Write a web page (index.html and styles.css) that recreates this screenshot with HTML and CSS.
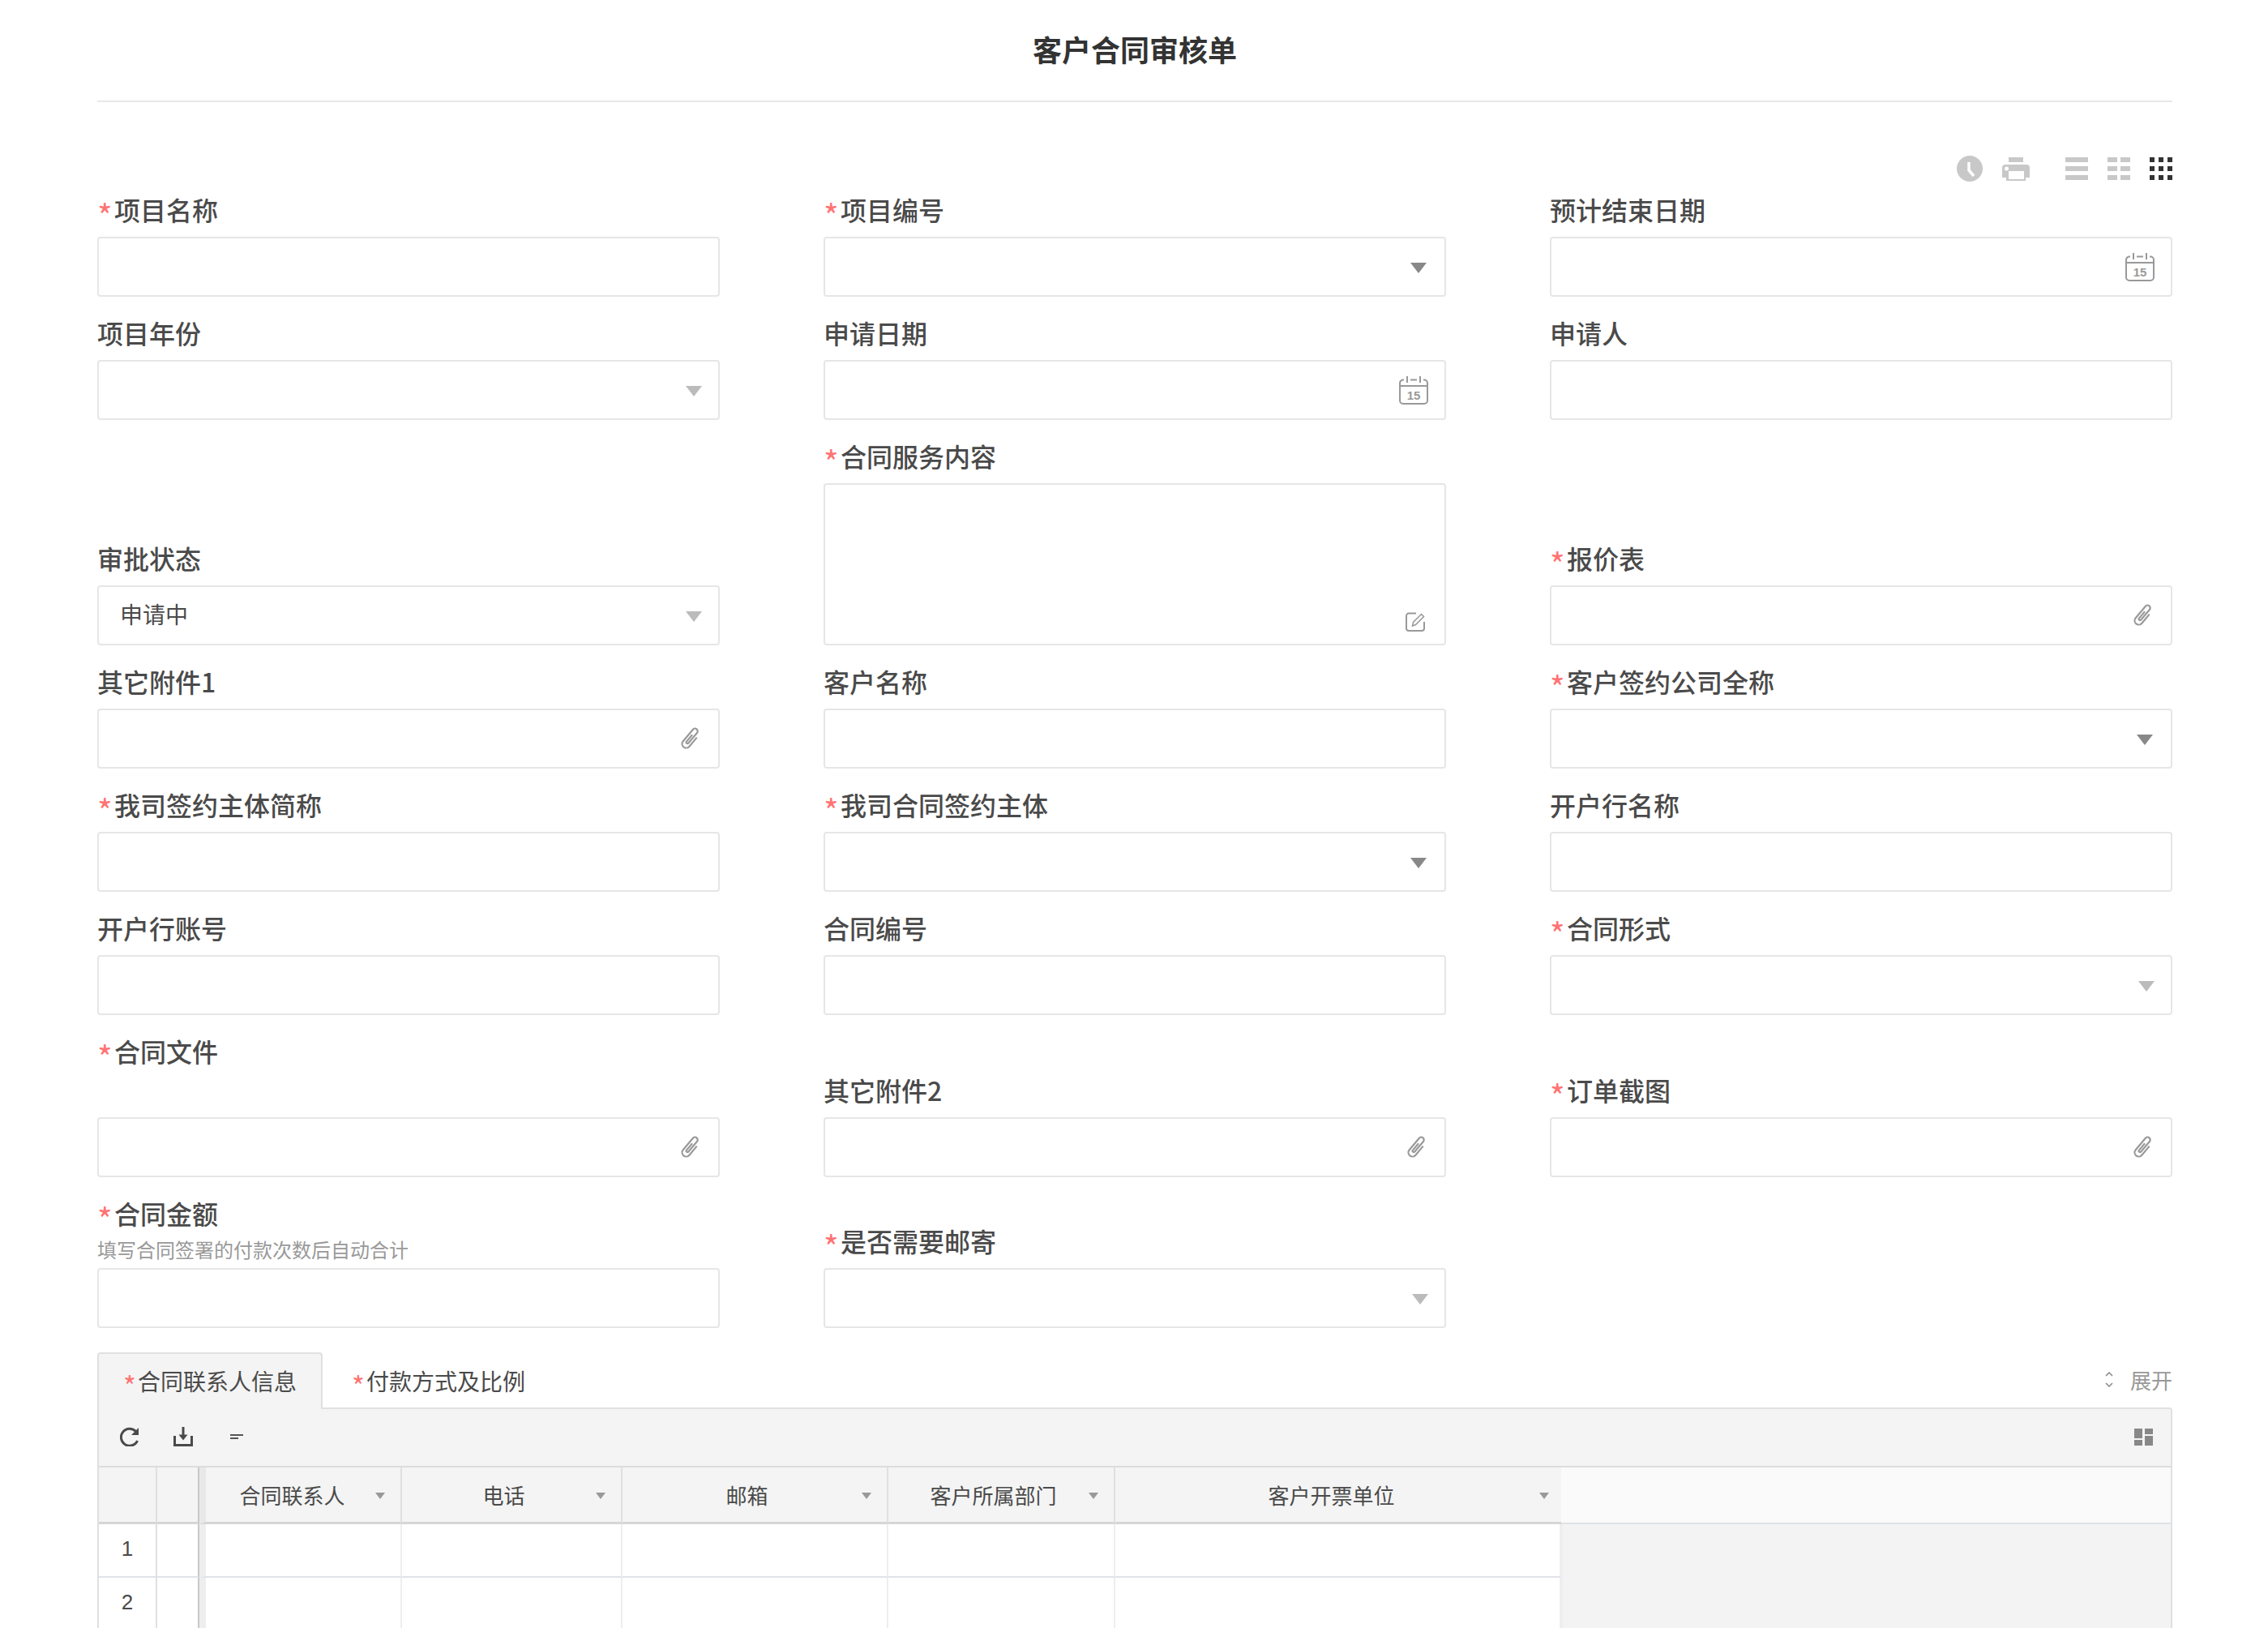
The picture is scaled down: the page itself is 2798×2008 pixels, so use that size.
FILE: index.html
```html
<!DOCTYPE html>
<html>
	<head>
		<meta charset="UTF-8">
		<title>客户合同审核单</title>
		<link rel="stylesheet" href="styles.css">
	</head>
	<body>
		<svg class="defs" width="0" height="0">
			<symbol id="i-clip" viewBox="0 0 24 28">
				<path d="M5-6V8.500a5 5 0 0 1-10 0V-10.500a3.250 3.250 0 0 1 6.500 0V6a1.500 1.500 0 0 1-3 0V-5" transform="translate(12 14) rotate(40)" fill="none" stroke="#999" stroke-width="2.200"/>
			</symbol>
		</svg>

		<div class="page">
			<h1 class="title">客户合同审核单</h1>

			<div class="tools">
				<svg width="32" height="32" viewBox="0 0 32 32"><circle cx="16" cy="16" r="16" fill="#c8c8c8"/><path d="M15 8v10l6 7" fill="none" stroke="#fff" stroke-width="3.500"/></svg>
				<svg class="tool-print" width="34" height="29" viewBox="0 0 34 29"><path fill="#c8c8c8" d="M8 0h18v6H8zM4 9h26a4 4 0 0 1 4 4v12h-5v4H5v-4H0V13a4 4 0 0 1 4-4z"/><path fill="#fff" d="M8 17h19v10H8z"/><circle cx="5.500" cy="14" r="2.500" fill="#fff"/></svg>
				<svg class="tool-view" width="28" height="28" viewBox="0 0 28 28" fill="#c8c8c8"><path d="M0 0h28v6H0zM0 11h28v6H0zM0 22h28v6H0z"/></svg>
				<svg width="28" height="28" viewBox="0 0 28 28" fill="#c8c8c8"><path d="M0 0h12v6H0zM16 0h12v6H16zM0 11h12v6H0zM16 11h12v6H16zM0 22h12v6H0zM16 22h12v6H16z"/></svg>
				<svg width="28" height="28" viewBox="0 0 28 28" fill="#333"><path d="M0 0h6v6H0zM11 0h6v6h-6zM22 0h6v6h-6zM0 11h6v6H0zM11 11h6v6h-6zM22 11h6v6h-6zM0 22h6v6H0zM11 22h6v6h-6zM22 22h6v6h-6z"/></svg>
			</div>

			<div class="form">
				<div class="field">
					<div class="label"><span class="req">*</span>项目名称</div>
					<div class="input"></div>
				</div>
				<div class="field">
					<div class="label"><span class="req">*</span>项目编号</div>
					<div class="input"><i class="arrow dark"></i></div>
				</div>
				<div class="field">
					<div class="label">预计结束日期</div>
					<div class="input">
						<svg class="ico-cal" viewBox="0 0 36 36"><path d="M6 5.500H5a4 4 0 0 0-4 4V31a4 4 0 0 0 4 4h26a4 4 0 0 0 4-4V9.500a4 4 0 0 0-4-4h-1M14 5.500h8M1 13h34M10 1v8M26 1v8" fill="none" stroke="#999" stroke-width="2"/><text class="cal-num" x="18" y="30" text-anchor="middle">15</text></svg>
					</div>
				</div>

				<div class="field">
					<div class="label">项目年份</div>
					<div class="input"><i class="arrow"></i></div>
				</div>
				<div class="field">
					<div class="label">申请日期</div>
					<div class="input">
						<svg class="ico-cal" viewBox="0 0 36 36"><path d="M6 5.500H5a4 4 0 0 0-4 4V31a4 4 0 0 0 4 4h26a4 4 0 0 0 4-4V9.500a4 4 0 0 0-4-4h-1M14 5.500h8M1 13h34M10 1v8M26 1v8" fill="none" stroke="#999" stroke-width="2"/><text class="cal-num" x="18" y="30" text-anchor="middle">15</text></svg>
					</div>
				</div>
				<div class="field">
					<div class="label">申请人</div>
					<div class="input"></div>
				</div>

				<div class="field">
					<div class="label">审批状态</div>
					<div class="input"><span class="value">申请中</span><i class="arrow"></i></div>
				</div>
				<div class="field">
					<div class="label"><span class="req">*</span>合同服务内容</div>
					<div class="input area">
						<svg class="ico-edit" width="24" height="24" viewBox="0 0 24 24" fill="none" stroke="#999" stroke-width="2"><path d="M13 1.500H4a3 3 0 0 0-3 3V20a3 3 0 0 0 3 3h16a3 3 0 0 0 3-3v-8"/><path d="M8.500 17l1-4.500L19.500 2.500l3 3-10 10z" stroke-width="1.500"/></svg>
					</div>
				</div>
				<div class="field">
					<div class="label"><span class="req">*</span>报价表</div>
					<div class="input"><svg class="ico-clip"><use href="#i-clip"/></svg></div>
				</div>

				<div class="field">
					<div class="label">其它附件1</div>
					<div class="input"><svg class="ico-clip"><use href="#i-clip"/></svg></div>
				</div>
				<div class="field">
					<div class="label">客户名称</div>
					<div class="input"></div>
				</div>
				<div class="field">
					<div class="label"><span class="req">*</span>客户签约公司全称</div>
					<div class="input"><i class="arrow dark"></i></div>
				</div>

				<div class="field">
					<div class="label"><span class="req">*</span>我司签约主体简称</div>
					<div class="input"></div>
				</div>
				<div class="field">
					<div class="label"><span class="req">*</span>我司合同签约主体</div>
					<div class="input"><i class="arrow dark"></i></div>
				</div>
				<div class="field">
					<div class="label">开户行名称</div>
					<div class="input"></div>
				</div>

				<div class="field">
					<div class="label">开户行账号</div>
					<div class="input"></div>
				</div>
				<div class="field">
					<div class="label">合同编号</div>
					<div class="input"></div>
				</div>
				<div class="field">
					<div class="label"><span class="req">*</span>合同形式</div>
					<div class="input"><i class="arrow"></i></div>
				</div>

				<div class="field">
					<div class="label"><span class="req">*</span>合同文件</div>
					<div class="blank"></div>
					<div class="input"><svg class="ico-clip"><use href="#i-clip"/></svg></div>
				</div>
				<div class="field">
					<div class="label">其它附件2</div>
					<div class="input"><svg class="ico-clip"><use href="#i-clip"/></svg></div>
				</div>
				<div class="field">
					<div class="label"><span class="req">*</span>订单截图</div>
					<div class="input"><svg class="ico-clip"><use href="#i-clip"/></svg></div>
				</div>

				<div class="field">
					<div class="label"><span class="req">*</span>合同金额</div>
					<div class="hint">填写合同签署的付款次数后自动合计</div>
					<div class="input"></div>
				</div>
				<div class="field">
					<div class="label"><span class="req">*</span>是否需要邮寄</div>
					<div class="input"><i class="arrow"></i></div>
				</div>
			</div>

			<div class="tabs">
				<div class="tab active"><span class="req">*</span>合同联系人信息</div>
				<div class="tab"><span class="req">*</span>付款方式及比例</div>
				<div class="expand">
					<svg width="12" height="19" viewBox="0 0 12 19" fill="none" stroke="#888" stroke-width="1.500"><path d="M2 5l4-4 4 4M2 14l4 4 4-4"/></svg>
					展开
				</div>
			</div>

			<div class="panel">
				<div class="bar">
					<svg width="24" height="24" viewBox="0 0 24 24" fill="none" stroke="#4a4a4a" stroke-width="3"><path d="M19.500 5.500A10.500 10.500 0 1 0 21.500 17"/><path d="M23 1v9h-9z" fill="#4a4a4a" stroke="none"/></svg>
					<svg width="24" height="24" viewBox="0 0 24 24" fill="none" stroke="#4a4a4a" stroke-width="3"><path d="M1.500 11v11.500h21V11M12 0v12"/><path d="M6.500 9.500h11L12 16.500z" fill="#4a4a4a" stroke="none"/></svg>
					<svg class="bar-sort" width="16" height="6" viewBox="0 0 16 6" fill="#555"><path d="M0 0h16v2H0zM0 4h10v2H0z"/></svg>
					<svg class="bar-layout" width="23" height="21" viewBox="0 0 23 21" fill="#888"><path d="M0 0h10v12H0zM0 14h10v7H0zM13 0h10v7H13zM13 9h10v12H13z"/></svg>
				</div>

				<div class="grid">
					<div class="th"></div>
					<div class="th freeze"></div>
					<div class="th first"><span>合同联系人</span><i class="th-arrow"></i></div>
					<div class="th"><span>电话</span><i class="th-arrow"></i></div>
					<div class="th"><span>邮箱</span><i class="th-arrow"></i></div>
					<div class="th"><span>客户所属部门</span><i class="th-arrow"></i></div>
					<div class="th last"><span>客户开票单位</span><i class="th-arrow"></i></div>
					<div class="th-rest"></div>

					<div class="td num">1</div>
					<div class="td freeze"></div>
					<div class="td first"></div>
					<div class="td"></div>
					<div class="td"></div>
					<div class="td"></div>
					<div class="td"></div>
					<div class="td-rest"></div>

					<div class="td num">2</div>
					<div class="td freeze"></div>
					<div class="td first"></div>
					<div class="td"></div>
					<div class="td"></div>
					<div class="td"></div>
					<div class="td"></div>
				</div>
			</div>
		</div>
	</body>
</html>
```

FILE: styles.css
```css
html, body{
	margin: 0;
	height: 2008px;
	overflow: hidden;
	background: #fff;
}
body{
	font-family: "Noto Sans CJK SC", sans-serif;
	color: #4a4a4a;
}
.defs{
	display: block;
}
.page{
	padding: 0 118px 0 120px;
}
.title{
	margin: 0;
	height: 124px;
	line-height: 120px;
	font-size: 36px;
	font-weight: 700;
	color: #333;
	text-align: center;
	border-bottom: 2px solid #e8e8e8;
}
.tools{
	display: flex;
	justify-content: flex-end;
	align-items: center;
	gap: 24px;
	height: 32px;
	margin: 66px 0 12px;
}
.tool-view{
	margin-left: 20px;
}
.form{
	display: grid;
	grid-template-columns: repeat(3, 768px);
	column-gap: 128px;
	row-gap: 22px;
	align-items: end;
}
.label{
	height: 48px;
	line-height: 44px;
	margin-bottom: 8px;
	font-size: 32px;
	font-weight: 500;
}
.req{
	display: inline-block;
	width: 21px;
	font-size: 40px;
	font-weight: 400;
	line-height: 0;
	vertical-align: -10px;
	color: #ff7373;
}
.blank{
	height: 48px;
}
.hint{
	height: 42px;
	margin-top: -8px;
	line-height: 38px;
	font-size: 24px;
	color: #999;
}
.input{
	display: flex;
	justify-content: flex-end;
	align-items: center;
	box-sizing: border-box;
	height: 74px;
	padding: 0 20px 0 26px;
	border: 2px solid #e6e6e6;
	border-radius: 4px;
	background: #fff;
}
.area{
	height: 200px;
	align-items: flex-end;
	padding-bottom: 15px;
}
.value{
	margin-right: auto;
	margin-bottom: 4px;
	font-size: 28px;
}
.arrow{
	width: 0;
	height: 0;
	margin-top: 3px;
	border-left: 10px solid transparent;
	border-right: 10px solid transparent;
	border-top: 13px solid #bbb;
}
.arrow.dark{
	margin-right: 2px;
	border-top-color: #888;
}
.ico-cal{
	width: 36px;
	height: 36px;
}
.cal-num{
	font: bold 15px "Liberation Sans", sans-serif;
	fill: #999;
}
.ico-clip{
	width: 24px;
	height: 28px;
	margin-right: 2px;
}
.ico-edit{
	margin-right: 4px;
}
.tabs{
	display: flex;
	align-items: flex-start;
	height: 68px;
	margin-top: 30px;
	font-size: 28px;
}
.tab{
	box-sizing: border-box;
	height: 68px;
	line-height: 66px;
	padding: 0 30px 0 34px;
	border: 2px solid transparent;
	border-bottom: 0;
	border-radius: 4px 4px 0 0;
}
.tab .req{
	width: 18px;
	font-size: 34px;
	vertical-align: -8px;
}
.tab.active{
	width: 278px;
	height: 70px;
	padding-left: 30px;
	padding-right: 0;
	border-color: #e0e0e0;
	background: #f4f4f4;
	position: relative;
}
.expand{
	display: flex;
	align-items: center;
	gap: 20px;
	margin-left: auto;
	height: 66px;
	font-size: 26px;
	color: #999;
}
.panel{
	border: 2px solid #e0e0e0;
	border-bottom: 0;
	border-radius: 0 4px 0 0;
}
.bar{
	display: flex;
	align-items: center;
	gap: 42px;
	box-sizing: border-box;
	height: 72px;
	padding: 0 22px 2px 26px;
	background: #f4f4f4;
	border-bottom: 2px solid #dcdcdc;
}
.bar-sort{
	margin-left: 4px;
}
.bar-layout{
	margin-left: auto;
}
.grid{
	display: grid;
	grid-template-columns: 72px 52px 250px 272px 328px 280px 550px 1fr;
	grid-auto-rows: 66px;
	grid-template-rows: 70px;
}
.th, .td{
	display: flex;
	align-items: center;
	box-sizing: border-box;
}
.th{
	padding: 0 19px 0 12px;
	font-size: 26px;
	background: #f4f4f4;
	border-right: 2px solid #dde0e4;
	border-bottom: 3px solid #d6d6d6;
}
.th span{
	flex: 1;
	text-align: center;
}
.th.first{
	padding-left: 4px;
}
.th.last{
	border-right: 0;
	padding-left: 10px;
	padding-right: 15px;
}
.th-arrow{
	width: 0;
	height: 0;
	margin-top: 2px;
	border-left: 6.500px solid transparent;
	border-right: 6.500px solid transparent;
	border-top: 8px solid #999;
}
.th-rest{
	background: #fafafa;
	border-bottom: 2px solid #dde2e6;
}
.td{
	border-right: 2px solid #eee;
	border-bottom: 2px solid #e0e4e8;
	background: #fff;
}
.td.num{
	justify-content: center;
	padding-bottom: 3px;
	border-right-color: #e0e0e0;
	font: 26px "Liberation Sans", sans-serif;
}
.th.freeze, .td.freeze{
	border-right: 2px solid #c8c8c8;
}
.first{
	border-left: 8px solid #eee;
}
.th.first{
	border-left-color: #e8e8e8;
}
.td-rest{
	grid-row: 2 / span 3;
	grid-column: 8;
	background: #f3f3f3;
	border-left: 2px solid #eee;
}
```
